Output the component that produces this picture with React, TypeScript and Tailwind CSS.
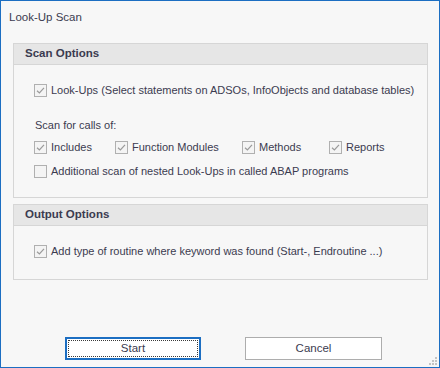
import React from 'react';

const font = { fontFamily: '"Liberation Sans", Arial, sans-serif' };

const CheckBox = ({ checked, label }: { checked?: boolean; label: string }) => (
  <label className="flex items-center h-4 gap-[4px] text-[11px] text-[#3b3b50] leading-4 whitespace-nowrap">
    <span className="w-[13px] h-[13px] border border-[#b0b0b0] bg-[#f4f4f4] flex items-center justify-center shrink-0">
      {checked && (
        <svg width="9" height="9" viewBox="0 0 9 9">
          <path d="M1 4.8 L3.4 7 L8 1.8" fill="none" stroke="#9a9a9a" strokeWidth="1.2" />
        </svg>
      )}
    </span>
    <span>{label}</span>
  </label>
);

const Group = ({ title, children, bodyClass }: { title: string; children: React.ReactNode; bodyClass: string }) => (
  <div className="border border-[#d6d6d6]">
    <div className="h-[21px] bg-[#e6e6e6] border-b border-[#d6d6d6] pl-[11px] flex items-center text-[11.5px] font-bold text-[#3b3b50]">
      {title}
    </div>
    <div className={bodyClass}>{children}</div>
  </div>
);

export default function App() {
  return (
    <div style={font} className="relative w-[440px] h-[368px] bg-[#f7f7f7] border border-[#1c6ec2] flex flex-col">
      <div className="pl-2 pt-[8px] h-[42px] text-[11.5px] leading-4 text-[#3b3b50]">Look-Up Scan</div>

      <div className="ml-[12px] mr-[11px] flex flex-col gap-[6px]">
        <Group title="Scan Options" bodyClass="pl-[20px] pt-[17px] pb-[18px] flex flex-col">
          <CheckBox checked label="Look-Ups (Select statements on ADSOs, InfoObjects and database tables)" />
          <div className="mt-[19px] h-4 leading-4 text-[11px] text-[#3b3b50] pl-[1px]">Scan for calls of:</div>
          <div className="mt-[6px] flex">
            <div className="w-[81px]"><CheckBox checked label="Includes" /></div>
            <div className="w-[127px]"><CheckBox checked label="Function Modules" /></div>
            <div className="w-[87px]"><CheckBox checked label="Methods" /></div>
            <CheckBox checked label="Reports" />
          </div>
          <div className="mt-[8px]">
            <CheckBox label="Additional scan of nested Look-Ups in called ABAP programs" />
          </div>
        </Group>

        <Group title="Output Options" bodyClass="pl-[20px] pt-[17px] pb-[20px]">
          <CheckBox checked label="Add type of routine where keyword was found (Start-, Endroutine ...)" />
        </Group>
      </div>

      <div className="mt-auto mb-[7px] pl-[64px] flex gap-[44px] text-[11.5px] text-[#3b3b50]">
        <button className="w-[136px] h-[23px] bg-white border-2 border-[#1c6ec2] p-[1px]">
          <div className="w-full h-full border border-dotted border-[#3a3a3a] flex items-center justify-center">Start</div>
        </button>
        <button className="w-[137px] h-[23px] bg-white border border-[#adadad] flex items-center justify-center">Cancel</button>
      </div>

      <svg className="absolute right-[1px] bottom-[1px]" width="9" height="9" viewBox="0 0 9 9">
        <rect x="6" y="0" width="2" height="2" fill="#c4c4c4" />
        <rect x="3" y="3" width="2" height="2" fill="#c4c4c4" />
        <rect x="6" y="3" width="2" height="2" fill="#c4c4c4" />
        <rect x="0" y="6" width="2" height="2" fill="#c4c4c4" />
        <rect x="3" y="6" width="2" height="2" fill="#c4c4c4" />
        <rect x="6" y="6" width="2" height="2" fill="#c4c4c4" />
      </svg>
    </div>
  );
}
